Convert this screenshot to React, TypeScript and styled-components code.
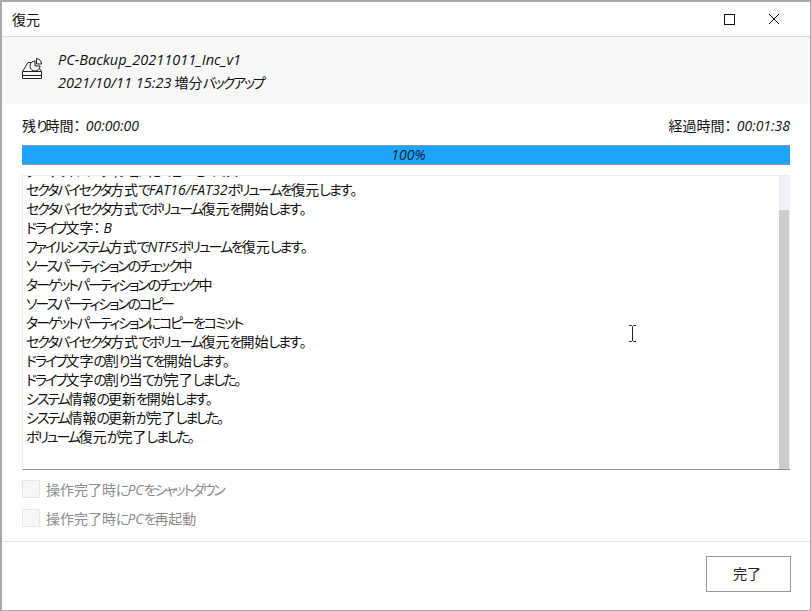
import styled, { createGlobalStyle } from "styled-components"

const Global = createGlobalStyle`
  html, body { margin: 0; padding: 0; background: #fff; }
  body {
    font-family: "Noto Sans CJK JP", "Noto Sans", sans-serif;
    font-feature-settings: "palt";
    color: #111;
  }
  * { box-sizing: border-box; }
`

const Win = styled.div`
  position: relative;
  width: 811px;
  height: 611px;
  display: flex;
  flex-direction: column;
  background: #fff;
  border: 1px solid #a9a9a9;
  border-width: 2px 1px 1px 2px;
  overflow: hidden;
`

const TitleBar = styled.div`
  flex: none;
  height: 35px;
  display: flex;
  align-items: center;
  justify-content: space-between;
  padding: 0 30px 0 10px;
  border-bottom: 1px solid #dcdcdc;
  font-size: 14px;
`

const WinBtns = styled.div`
  display: flex;
  align-items: center;
  gap: 33px;
`

const Header = styled.div`
  flex: none;
  height: 67px;
  background: #f8f8f8;
  display: flex;
  align-items: center;
  padding-left: 20px;
  gap: 16px;
`

const DriveIcon = styled.svg`
  margin-bottom: 4px;
`

const HeaderText = styled.div`
  display: flex;
  flex-direction: column;
  gap: 4px;
  font-size: 14px;
  line-height: 19px;
`

const Em = styled.i`
  font-family: "Open Sans", "Liberation Sans", sans-serif;
  font-style: italic;
  font-size: 14px;
  line-height: 1;
`

const HeaderEm = styled(Em)`
  display: inline-block;
  font-size: 14.5px;
  line-height: 19px;
`

const Time = styled(Em)`
  margin-left: 2px;
`

const Kana = styled.span`
  letter-spacing: -2.1px;
`

const Body = styled.div`
  flex: 1;
  display: flex;
  flex-direction: column;
  padding: 12px 20px 0 20px;
`

const TimeRow = styled.div`
  display: flex;
  justify-content: space-between;
  font-size: 14px;
  line-height: 19px;
  height: 19px;
`

const Bar = styled.div`
  margin-top: 10px;
  height: 20px;
  padding-left: 5px;
  background: #1ca5fb;
  border-top: 1px solid #8a9aa5;
  border-bottom: 1px solid #8a9aa5;
  text-align: center;
  font-family: "Open Sans", "Liberation Sans", sans-serif;
  font-style: italic;
  font-size: 14px;
  line-height: 18px;
  color: #0c2230;
`

const LogBox = styled.div`
  margin-top: 10px;
  height: 295px;
  display: flex;
  border: 1px solid #ededed;
  border-bottom: 1px solid #8e8e8e;
  border-right: none;
`

const LogText = styled.div`
  flex: 1;
  display: flex;
  flex-direction: column;
  justify-content: flex-end;
  overflow: hidden;
  padding: 0 0 23px 3px;
  font-size: 14px;
`

const Line = styled.div`
  flex: none;
  height: 19px;
  line-height: 19px;
  white-space: nowrap;
`

const Track = styled.div`
  flex: none;
  width: 11px;
  border-right: 1px solid #f2f2f2;
  padding-top: 34px;
  background: #eff2f7;
  display: flex;
`

const Thumb = styled.div`
  flex: 1;
  background: #cdcdcd;
`

const Options = styled.div`
  display: flex;
  flex-direction: column;
  gap: 11px;
  margin-top: 10px;
`

const Option = styled.label`
  display: flex;
  align-items: center;
  gap: 6px;
  height: 18px;
  font-size: 14px;
  color: #8c8c8c;
`

const Box = styled.span`
  flex: none;
  width: 18px;
  height: 18px;
  background: #f7f7f7;
  border: 1px solid #e6e6e6;
  border-radius: 1px;
`

const Footer = styled.div`
  flex: none;
  height: 69px;
  border-top: 1px solid #dce2e2;
  display: flex;
  justify-content: flex-end;
  padding: 14px 19px 0 0;
`

const DoneBtn = styled.button`
  width: 85px;
  height: 36px;
  padding: 0 3px 2px 0;
  background: #fff;
  border: 1px solid #9a9a9a;
  border-radius: 0;
  font: inherit;
  font-size: 14px;
  color: #222;
`

const Cursor = styled.svg`
  position: absolute;
  left: 624px;
  top: 323px;
`

// kana run narrower than kanji, like the UI font in the screenshot
function J({ t }: { t: string }) {
  const parts = t.split(/([\u3040-\u30ff]+)/)
  return (
    <>
      {parts.map((p, i) => (i % 2 ? <Kana key={i}>{p}</Kana> : p))}
    </>
  )
}

const lines = [
  <J t="ターゲットパーティションにコピーをコミット" />,
  <><J t="セクタバイセクタ方式で" /><Em>FAT16/FAT32</Em><J t="ボリュームを復元します。" /></>,
  <J t="セクタバイセクタ方式でボリューム復元を開始します。" />,
  <><J t="ドライブ文字：" /> <Em>B</Em></>,
  <><J t="ファイルシステム方式で" /><Em>NTFS</Em><J t="ボリュームを復元します。" /></>,
  <J t="ソースパーティションのチェック中" />,
  <J t="ターゲットパーティションのチェック中" />,
  <J t="ソースパーティションのコピー" />,
  <J t="ターゲットパーティションにコピーをコミット" />,
  <J t="セクタバイセクタ方式でボリューム復元を開始します。" />,
  <J t="ドライブ文字の割り当てを開始します。" />,
  <J t="ドライブ文字の割り当てが完了しました。" />,
  <J t="システム情報の更新を開始します。" />,
  <J t="システム情報の更新が完了しました。" />,
  <J t="ボリューム復元が完了しました。" />,
]

export default function App() {
  return (
    <Win>
      <Global />
      <TitleBar>
        <span>復元</span>
        <WinBtns>
          <svg width="11" height="11" viewBox="0 0 11 11"><rect x=".5" y=".5" width="10" height="10" fill="none" stroke="#111" strokeWidth="1" /></svg>
          <svg width="12" height="12" viewBox="0 0 12 12"><path d="M1 1l10 10M11 1L1 11" stroke="#111" strokeWidth="1" fill="none" /></svg>
        </WinBtns>
      </TitleBar>
      <Header>
        <DriveIcon width="20" height="21" viewBox="0 0 20 21" fill="none" stroke="#222" strokeWidth="1">
          <path d="M.5 13.5L6 4.5h3M16.5 9l3 4.5" />
          <path d="M.5 13.5h19v7H.5z" />
          <path d="M1 17.5h18" />
          <path d="M13 3a5 5 0 1 0 5 5h-5z" fill="#f8f8f8" />
          <path d="M14.5 .5v5.5h5a5.5 5.5 0 0 0-5-5.5z" />
        </DriveIcon>
        <HeaderText>
          <HeaderEm>PC-Backup_20211011_Inc_v1</HeaderEm>
          <span><HeaderEm>2021/10/11 15:23</HeaderEm> <J t="増分バックアップ" /></span>
        </HeaderText>
      </Header>
      <Body>
        <TimeRow>
          <span><J t="残り時間：" /> <Time>00:00:00</Time></span>
          <span><J t="経過時間：" /> <Time>00:01:38</Time></span>
        </TimeRow>
        <Bar>100%</Bar>
        <LogBox>
          <LogText>
            {lines.map((l, i) => <Line key={i}>{l}</Line>)}
          </LogText>
          <Track><Thumb /></Track>
        </LogBox>
        <Options>
          <Option><Box /><span><J t="操作完了時に" /><Em>PC</Em><J t="をシャットダウン" /></span></Option>
          <Option><Box /><span><J t="操作完了時に" /><Em>PC</Em><J t="を再起動" /></span></Option>
        </Options>
      </Body>
      <Footer>
        <DoneBtn>完了</DoneBtn>
      </Footer>
      <Cursor width="14" height="18" viewBox="0 0 14 18" fill="none" stroke="#222" strokeWidth="1">
        <path d="M3 .5h2.5l1 1 1-1H10M3 16.5h2.5l1-1 1 1H10M6.5 1.5v14" />
      </Cursor>
    </Win>
  )
}
